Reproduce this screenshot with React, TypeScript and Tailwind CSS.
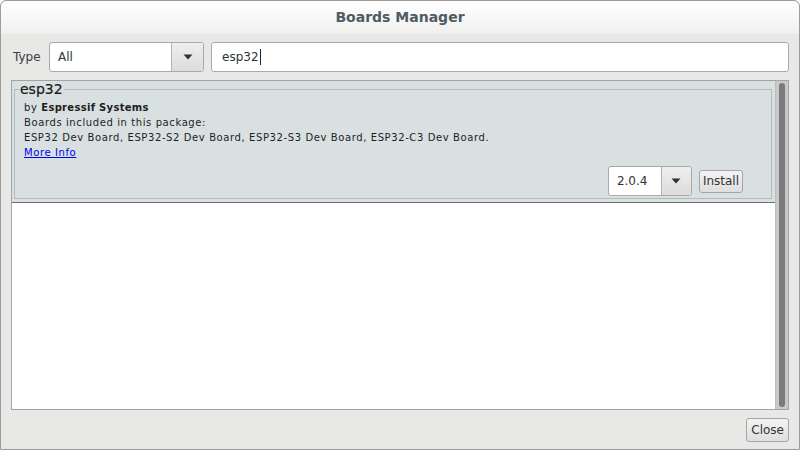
const font = { fontFamily: '"DejaVu Sans", Verdana, sans-serif' }

function Caret() {
  return (
    <svg width="10" height="6" viewBox="0 0 10 6" className="block">
      <path d="M0.5 0.5 H9.5 L5 5.5 Z" fill="#2e3436" />
    </svg>
  )
}

function ComboBox({ value, width, buttonWidth }: { value: string; width: string; buttonWidth: string }) {
  return (
    <div className={`flex h-[30px] ${width} rounded-[3px] border border-[#a9a9a9] bg-white`}>
      <div className="flex flex-1 items-center pl-[8px] text-[12px] text-[#2e3436]">{value}</div>
      <div
        className={`flex ${buttonWidth} items-center justify-center rounded-r-[3px] border-l border-[#b4b4b4] bg-gradient-to-b from-[#efefef] to-[#dcdcdc]`}
      >
        <Caret />
      </div>
    </div>
  )
}

export default function App() {
  return (
    <div
      className="flex h-[450px] w-[800px] flex-col rounded-t-[6px] border border-[#9c9c9c] bg-[#e8e8e7] text-[#2e3436]"
      style={font}
    >
      <div className="flex h-[33px] items-center justify-center rounded-t-[6px] bg-gradient-to-b from-[#ffffff] to-[#f0f0ef]">
        <span className="text-[14px] font-bold text-[#4e5b65]">Boards Manager</span>
      </div>

      <div className="mt-[8px] flex h-[30px] items-center pl-[12px] pr-[10px]">
        <span className="w-[36px] text-[12px] text-[#3c3c3c]">Type</span>
        <ComboBox value="All" width="w-[155px]" buttonWidth="w-[32px]" />
        <div className="ml-[7px] flex h-[30px] flex-1 items-center rounded-[3px] border border-[#a9a9a9] bg-white pl-[10px] text-[12px]">
          esp32
          <span className="ml-px h-[16px] w-px bg-[#222]" />
        </div>
      </div>

      <div className="mx-[10px] mt-[8px] flex flex-1 border border-[#a3a3a3] bg-white">
        <div className="flex-1">
          <div className="flex h-[122px] flex-col border-b border-[#6e6e6e] bg-[#d8e0e1] pb-[3px] pl-[2px] pr-[3px]">
            <fieldset className="flex flex-1 flex-col border border-[#b3bbbc] pl-[9px] pr-[28px] pb-[2px]">
              <legend className="ml-[-5px] px-[1px] text-[14px] leading-[16px] text-[#1a1a1a] [-webkit-text-stroke:0.2px_#1a1a1a]">
                esp32
              </legend>
              <div className="mt-[3px] text-[10px] leading-[15px] tracking-[0.6px] text-[#1e1e1e]">
                <div>
                  by <span className="font-bold tracking-[0.3px]">Espressif Systems</span>
                </div>
                <div>Boards included in this package:</div>
                <div>ESP32 Dev Board, ESP32-S2 Dev Board, ESP32-S3 Dev Board, ESP32-C3 Dev Board.</div>
                <div>
                  <span className="text-[#0000ee] underline">More Info</span>
                </div>
              </div>
              <div className="mt-auto flex items-center justify-end">
                <ComboBox value="2.0.4" width="w-[84px]" buttonWidth="w-[30px]" />
                <button className="ml-[7px] h-[23px] rounded-[3px] border border-[#a5a5a5] bg-gradient-to-b from-[#f4f4f4] to-[#dedede] px-[3px] text-[12px] text-[#2e3436]">
                  Install
                </button>
              </div>
            </fieldset>
          </div>
        </div>
        <div className="flex w-[13px] justify-center border-l border-[#bdbdbd] bg-[#c9c9c9] py-[2px]">
          <div className="w-[6px] rounded-[3px] bg-[#7a7a7a]" />
        </div>
      </div>

      <div className="flex justify-end pb-[7px] pr-[10px] pt-[8px]">
        <button className="h-[24px] rounded-[3px] border border-[#a5a5a5] bg-gradient-to-b from-[#f4f4f4] to-[#dedede] px-[4px] text-[12px] text-[#2e3436]">
          Close
        </button>
      </div>
    </div>
  )
}
